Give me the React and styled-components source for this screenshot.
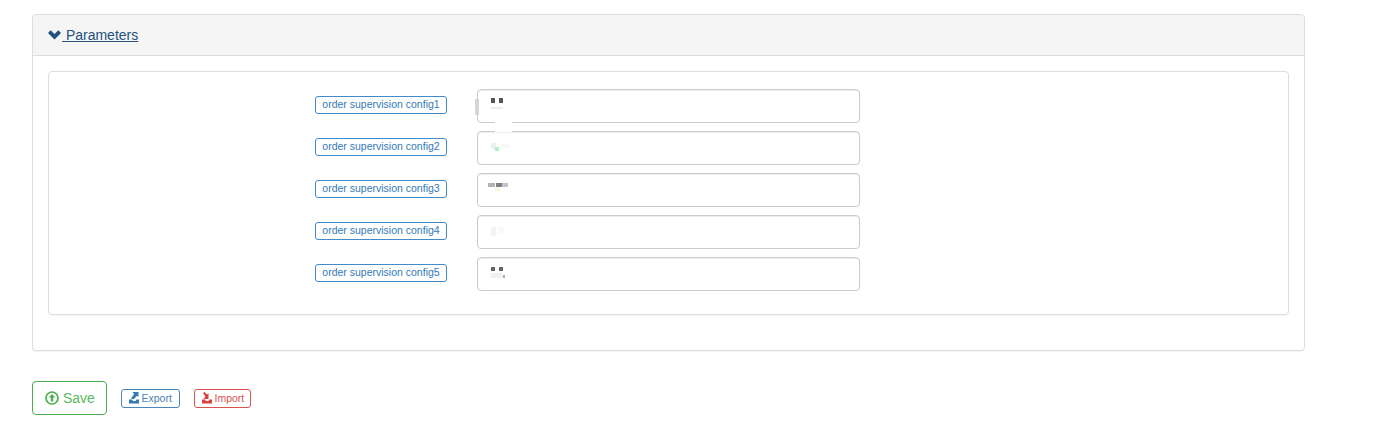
import { createGlobalStyle } from "styled-components"
import styled from "styled-components"

const GlobalStyle = createGlobalStyle`
  body {
    margin: 0;
    background: #fff;
    font-family: "Liberation Sans", Arial, sans-serif;
    font-size: 14px;
    color: #333;
  }
`

const configs = [
  {
    name: "order supervision config1",
    marks: [
      { x: 14, y: 9, w: 4, h: 5, c: "#555" },
      { x: 22, y: 9, w: 4, h: 5, c: "#555" },
      { x: 14, y: 18, w: 12, h: 2, c: "#ececec" },
    ],
  },
  {
    name: "order supervision config2",
    marks: [
      { x: 14, y: 12, w: 5, h: 6, c: "#efefef" },
      { x: 18, y: 16, w: 4, h: 4, c: "#b5efc9" },
      { x: 24, y: 13, w: 8, h: 4, c: "#f8f8f8" },
    ],
  },
  {
    name: "order supervision config3",
    marks: [
      { x: 11, y: 10, w: 7, h: 4, c: "#b5b5b5" },
      { x: 19, y: 10, w: 6, h: 4, c: "#808080" },
      { x: 25, y: 10, w: 6, h: 4, c: "#c4c4c4" },
      { x: 18, y: 15, w: 5, h: 3, c: "#f8f6d8" },
    ],
  },
  {
    name: "order supervision config4",
    marks: [
      { x: 14, y: 12, w: 5, h: 9, c: "#f4f4f4" },
      { x: 21, y: 12, w: 6, h: 6, c: "#f9f9f9" },
    ],
  },
  {
    name: "order supervision config5",
    marks: [
      { x: 14, y: 10, w: 4, h: 4, c: "#666" },
      { x: 22, y: 10, w: 4, h: 4, c: "#666" },
      { x: 14, y: 16, w: 12, h: 5, c: "#f1f1f1" },
      { x: 26, y: 18, w: 2, h: 3, c: "#9db4cf" },
    ],
  },
]

function ChevronIcon() {
  return (
    <svg width="13" height="10" viewBox="0 0 13 10">
      <path d="M0 3 2.7.3 6.5 4.1 10.3.3 13 3 6.5 9.5z" fill="#23527c" />
    </svg>
  )
}

function SaveIcon() {
  return (
    <svg width="14" height="14" viewBox="0 0 14 14">
      <circle cx="7" cy="7" r="6" fill="none" stroke="#4cae4c" strokeWidth="1.7" />
      <path d="M7 3 10.2 6.6H8.2V10.6H5.8V6.6H3.8z" fill="#4cae4c" />
    </svg>
  )
}

function ExportIcon() {
  return (
    <svg width="10" height="12" viewBox="0 0 10 12">
      <path d="M3.5 0H9.5V5L8 3.8 5 7H2.5V5.5L5.2 2.2z" fill="#337ab7" />
      <path d="M0 7.5H3L4 9H6.5L7.5 7.5H10V11.5H0z" fill="#337ab7" />
    </svg>
  )
}

function ImportIcon() {
  return (
    <svg width="10" height="12" viewBox="0 0 10 12">
      <path d="M1 1 2.5 0 5 2.6 6.5 1V7H1.5L3.4 4.5z" fill="#d9433f" />
      <path d="M0 7.5H3L4 9H6.5L7.5 7.5H10V11.5H0z" fill="#d9433f" />
    </svg>
  )
}

function ConfigRow({ name, marks, index }) {
  return (
    <Row>
      <LabelCell>
        <Tag>{name}</Tag>
      </LabelCell>
      <FieldWrap>
        <Field type="text" aria-label={name} />
        {marks.map((m, i) => (
          <Mark key={i} style={{ left: m.x, top: m.y, width: m.w, height: m.h, background: m.c }} />
        ))}
        {index === 0 && <Handle />}
        {index === 0 && <Patch />}
      </FieldWrap>
    </Row>
  )
}

export default function App() {
  return (
    <>
      <GlobalStyle />
      <Page>
        <Panel>
          <PanelHeading>
            <Toggle href="#">
              <ChevronIcon /> Parameters
            </Toggle>
          </PanelHeading>
          <PanelBody>
            <Well>
              {configs.map((config, i) => (
                <ConfigRow key={config.name} index={i} {...config} />
              ))}
            </Well>
          </PanelBody>
        </Panel>
        <Actions>
          <SaveButton>
            <SaveIcon />
            Save
          </SaveButton>
          <SmallButton color="#4a86bd" text="#4a7fb5" width="59px" gap="14px">
            <ExportIcon />
            Export
          </SmallButton>
          <SmallButton color="#d9534f" text="#d9534f" width="57px" gap="0">
            <ImportIcon />
            Import
          </SmallButton>
        </Actions>
      </Page>
    </>
  )
}

const Page = styled.div`
  width: 1273px;
  padding: 14px 0 0 32px;
`

const Panel = styled.section`
  height: 337px;
  box-sizing: border-box;
  border: 1px solid #ddd;
  border-radius: 4px;
  box-shadow: 0 1px 1px rgba(0, 0, 0, 0.05);
`

const PanelHeading = styled.div`
  height: 41px;
  box-sizing: border-box;
  display: flex;
  align-items: center;
  padding: 0 15px;
  background: #f5f5f5;
  border-bottom: 1px solid #ddd;
  border-radius: 3px 3px 0 0;
`

const Toggle = styled.a`
  color: #23527c;
  font-size: 14px;
  text-decoration: underline;
  display: inline-flex;
  align-items: center;
  gap: 1px;
  white-space: pre;
`

const PanelBody = styled.div`
  padding: 15px;
`

const Well = styled.div`
  height: 244px;
  box-sizing: border-box;
  padding: 17px 0 0;
  display: flex;
  flex-direction: column;
  gap: 8px;
  border: 1px solid #ddd;
  border-radius: 4px;
  box-shadow: 0 1px 1px rgba(0, 0, 0, 0.05);
`

const Row = styled.div`
  display: flex;
  align-items: flex-start;
  gap: 30px;
`

const LabelCell = styled.div`
  width: 398px;
  padding-top: 7px;
  display: flex;
  justify-content: flex-end;
`

const Tag = styled.span`
  box-sizing: border-box;
  height: 18px;
  width: 132px;
  padding-bottom: 2px;
  display: flex;
  align-items: center;
  justify-content: center;
  font-size: 10.5px;
  color: #337ab7;
  border: 1px solid #428bca;
  border-radius: 3px;
  white-space: nowrap;
`

const FieldWrap = styled.div`
  position: relative;
  width: 383px;
  height: 34px;
`

const Field = styled.input`
  display: block;
  width: 100%;
  height: 100%;
  box-sizing: border-box;
  border: 1px solid #ccc;
  border-radius: 4px;
  background: #fff;
  box-shadow: inset 0 1px 1px rgba(0, 0, 0, 0.075);
  outline: none;
`

const Mark = styled.span`
  position: absolute;
  filter: blur(0.4px);
`

const Handle = styled.span`
  position: absolute;
  left: -2px;
  top: 10px;
  width: 4px;
  height: 16px;
  background: #d6d6d6;
`

const Patch = styled.span`
  position: absolute;
  left: 18px;
  top: 30px;
  width: 17px;
  height: 13px;
  background: #fff;
  z-index: 1;
`

const Actions = styled.div`
  display: flex;
  align-items: center;
  margin-top: 30px;
`

const SaveButton = styled.button`
  box-sizing: border-box;
  width: 75px;
  height: 34px;
  display: flex;
  align-items: center;
  gap: 4px;
  padding: 0 0 0 12px;
  background: #fff;
  color: #5cb85c;
  font-family: inherit;
  font-size: 14px;
  border: 1px solid #4cae4c;
  border-radius: 4px;
  margin-right: 14px;
`

const SmallButton = styled.button`
  box-sizing: border-box;
  width: ${(props) => props.width};
  height: 19px;
  display: flex;
  align-items: center;
  gap: 2.5px;
  padding: 0 0 0 7px;
  background: #fff;
  color: ${(props) => props.text};
  font-family: inherit;
  font-size: 10.5px;
  white-space: nowrap;
  border: 1px solid ${(props) => props.color};
  border-radius: 3px;
  margin-right: ${(props) => props.gap};
`
